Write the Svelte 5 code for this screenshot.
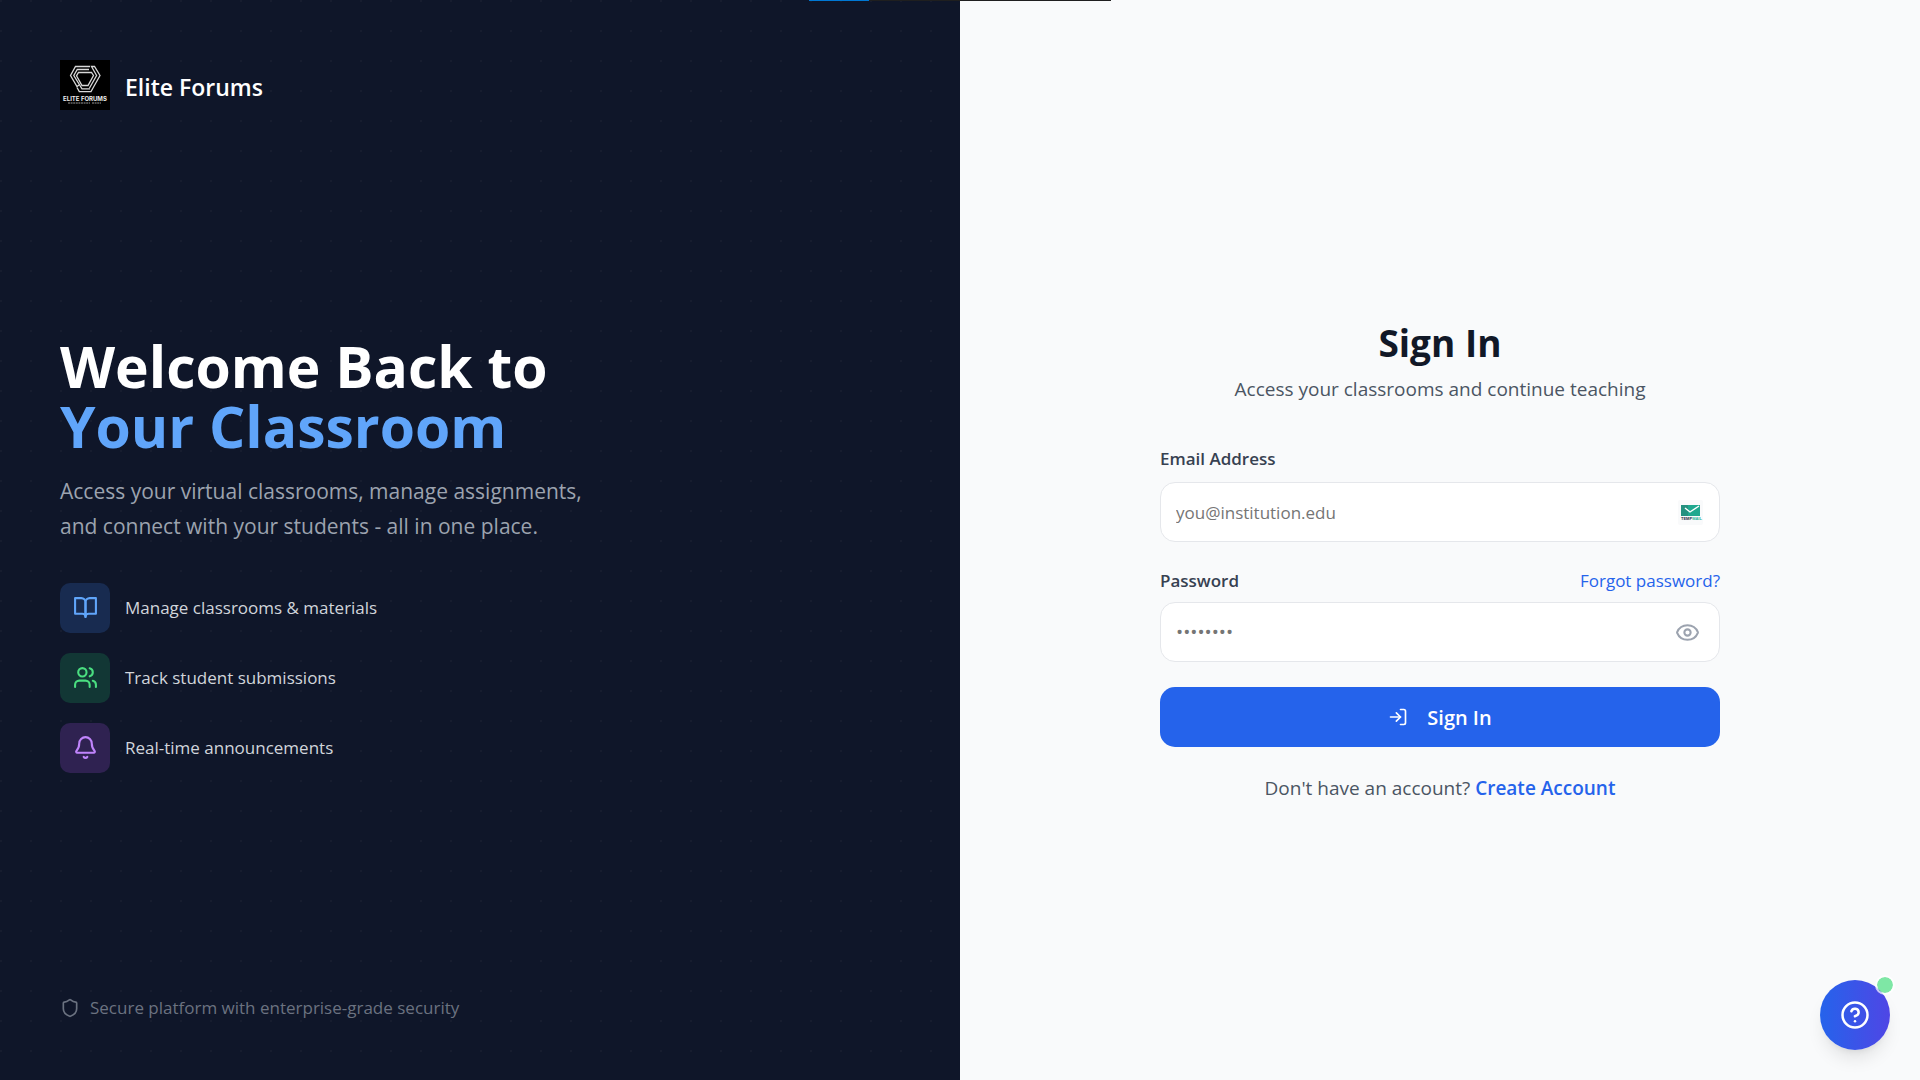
<script>
  let email = $state('');
  let password = $state('');
  let visible = $state(false);

  const features = [
    { tone: 'blue', icon: 'book', label: 'Manage classrooms & materials' },
    { tone: 'green', icon: 'users', label: 'Track student submissions' },
    { tone: 'purple', icon: 'bell', label: 'Real-time announcements' }
  ];

  const paths = {
    book: ['M2 3h6a4 4 0 0 1 4 4v14a3 3 0 0 0-3-3H2z', 'M22 3h-6a4 4 0 0 0-4 4v14a3 3 0 0 1 3-3h7z'],
    users: ['M16 21v-2a4 4 0 0 0-4-4H6a4 4 0 0 0-4 4v2', 'M13 7a4 4 0 1 1-8 0 4 4 0 0 1 8 0', 'M22 21v-2a4 4 0 0 0-3-3.87', 'M16 3.13a4 4 0 0 1 0 7.75'],
    bell: ['M10.27 21a2 2 0 0 0 3.46 0', 'M3.26 15.33A1 1 0 0 0 4 17h16a1 1 0 0 0 .74-1.67C19.41 13.96 18 12.5 18 8A6 6 0 0 0 6 8c0 4.5-1.41 5.96-2.74 7.33'],
    shield: ['M20 13c0 5-3.5 7.5-7.66 8.95a1 1 0 0 1-.67-.01C7.5 20.5 4 18 4 13V6a1 1 0 0 1 1-1c2 0 4.5-1.2 6.24-2.72a1.17 1.17 0 0 1 1.52 0C14.51 3.81 17 5 19 5a1 1 0 0 1 1 1z'],
    eye: ['M2.06 12.35a1 1 0 0 1 0-.7 10.75 10.75 0 0 1 19.88 0 1 1 0 0 1 0 .7 10.75 10.75 0 0 1-19.88 0', 'M15 12a3 3 0 1 1-6 0 3 3 0 0 1 6 0'],
    login: ['M15 3h4a2 2 0 0 1 2 2v14a2 2 0 0 1-2 2h-4', 'M10 17l5-5-5-5', 'M15 12H3'],
    help: ['M22 12a10 10 0 1 1-20 0 10 10 0 0 1 20 0', 'M9.09 9a3 3 0 0 1 5.83 1c0 2-3 3-3 3', 'M12 17h.01']
  };
</script>

{#snippet icon(name)}
  <svg class="icon" viewBox="0 0 24 24" aria-hidden="true">
    {#each paths[name] as d}<path {d} />{/each}
  </svg>
{/snippet}

<div class="page">
  <div class="topbar"></div>

  <section class="brand-panel">
    <header class="brand">
      <svg class="logo" viewBox="0 0 50 50" aria-hidden="true">
        <rect width="50" height="50" fill="#000" />
        <g fill="none" stroke="#d8d8d8" stroke-width="1.3">
          <path d="M30 6.5H15.5L10.5 15.5 17 26.5 19 25" />
          <path d="M29 9.5H17.3L13.8 15.5 22 28.8H30" />
          <path d="M17 27.5 19.3 31.6H31L33 28 40 15.5 34.5 6.5H31.5L36.6 15.5 29.5 28" />
          <path d="M18.5 12.5H31.5L33.5 15.5 28 25.5H22L16.5 15.8Z" />
        </g>
        <text x="25" y="41" text-anchor="middle">ELITE FORUMS</text>
        <path d="M8 43H30M32 43H41" stroke="#999" stroke-width="1" stroke-dasharray="2 .6" />
      </svg>
      <span>Elite Forums</span>
    </header>

    <div class="hero">
      <h1>Welcome Back to<em>Your Classroom</em></h1>
      <p>Access your virtual classrooms, manage assignments,<br />and connect with your students - all in one place.</p>
      <ul>
        {#each features as f}
          <li><span class="tile {f.tone}">{@render icon(f.icon)}</span>{f.label}</li>
        {/each}
      </ul>
    </div>

    <footer>{@render icon('shield')}Secure platform with enterprise-grade security</footer>
  </section>

  <main class="form-panel">
    <div class="card">
      <h2>Sign In</h2>
      <p class="sub">Access your classrooms and continue teaching</p>

      <form onsubmit={(e) => e.preventDefault()}>
        <div class="row"><label for="email">Email Address</label></div>
        <div class="field">
          <input id="email" type="email" placeholder="you@institution.edu" bind:value={email} />
          <svg class="mail" viewBox="0 0 25 25" aria-hidden="true">
            <rect width="25" height="25" rx="2" fill="#f9fafb" />
            <rect x="3" y="5" width="19" height="11" fill="#1fa88f" />
            <path d="M3 5h7v11H3z" fill="#24907f" />
            <path d="M7 8l5 4 9-6" fill="none" stroke="#fff" stroke-width="1.4" />
            <text x="3" y="20">TEMP<tspan fill="#2bb39b">MAIL</tspan></text>
          </svg>
        </div>

        <div class="row second">
          <label for="password">Password</label>
          <a class="forgot" href="#forgot">Forgot password?</a>
        </div>
        <div class="field">
          <input id="password" type={visible ? 'text' : 'password'} placeholder="••••••••" bind:value={password} />
          <button class="eye" type="button" aria-label="Show password" onclick={() => (visible = !visible)}>{@render icon('eye')}</button>
        </div>

        <button class="submit" type="submit">{@render icon('login')}Sign In</button>
      </form>

      <p class="signup">Don't have an account? <a href="#create">Create Account</a></p>
    </div>
  </main>

  <button class="help" type="button" aria-label="Help">{@render icon('help')}<span class="status"></span></button>
</div>

<style>
  :global(body) { margin: 0; }
  .page {
    position: relative;
    display: grid;
    grid-template-columns: 1fr 1fr;
    min-height: 100vh;
    font-family: "Segoe UI", "Open Sans", "Noto Sans", sans-serif;
    font-size: 17px;
    line-height: 25px;
    color: #111827;
    background: #f9fafb;
  }
  .page * { box-sizing: border-box; }
  h1, h2, p, ul { margin: 0; padding: 0; }
  a { color: #2563eb; text-decoration: none; }
  button, input { font: inherit; }
  button { border: 0; padding: 0; cursor: pointer; }
  .icon {
    width: 25px;
    height: 25px;
    flex: none;
    fill: none;
    stroke: currentColor;
    stroke-width: 2;
    stroke-linecap: round;
    stroke-linejoin: round;
  }
  .topbar {
    position: absolute;
    top: 0;
    left: 50%;
    width: 302px;
    height: 1px;
    transform: translateX(-50%);
    background: linear-gradient(90deg, #0078d4 60px, #1f1f1f 60px);
  }

  .brand-panel {
    display: flex;
    flex-direction: column;
    justify-content: space-between;
    padding: 60px;
    color: #fff;
    background: conic-gradient(from 270deg at 2px 2px, #171d2f 90deg, transparent 0) 0 0 / 30px 30px #0f1629;
  }
  .brand {
    display: flex;
    align-items: center;
    gap: 15px;
    height: 50px;
    font-size: 23px;
    line-height: 30px;
    font-weight: 600;
  }
  .brand span { padding-top: 3px; }
  .logo { width: 50px; height: 50px; }
  .logo text { font: bold 6px Inter, sans-serif; fill: #eee; }
  .hero { padding-top: 3px; }
  h1 { font-size: 57px; line-height: 60px; font-weight: 700; }
  h1 em { display: block; font-style: normal; color: #60a5fa; }
  .hero p { margin-top: 18px; font-size: 21px; line-height: 35px; color: #9ca3af; }
  ul { display: grid; gap: 20px; margin-top: 39px; list-style: none; }
  li { display: flex; align-items: center; gap: 15px; color: #d1d5db; }
  .tile { display: grid; place-items: center; width: 50px; height: 50px; border-radius: 10px; }
  .blue { color: #60a5fa; background: #182b50; }
  .green { color: #4ade80; background: #123735; }
  .purple { color: #c084fc; background: #2f2251; }
  footer { display: flex; align-items: center; gap: 10px; color: #6b7280; }
  footer .icon { width: 20px; height: 20px; }

  .form-panel { display: flex; align-items: center; justify-content: center; padding: 43px 40px 0; }
  .card { width: 100%; max-width: 560px; }
  h2 { font-size: 37px; line-height: 45px; font-weight: 700; text-align: center; }
  .sub { margin-top: 9px; font-size: 19px; line-height: 30px; text-align: center; color: #4b5563; }
  form { margin-top: 42px; }
  .row { display: flex; justify-content: space-between; margin-bottom: 11px; }
  .second { margin-top: 26px; margin-bottom: 9px; }
  label { font-weight: 600; color: #374151; }
  .field {
    display: flex;
    align-items: center;
    height: 60px;
    padding: 0 16px 0 15px;
    border: 1px solid #e5e7eb;
    border-radius: 15px;
    background: #fff;
  }
  input { flex: 1; min-width: 0; padding: 0; border: 0; outline: 0; background: none; color: inherit; }
  input::placeholder { color: #757575; opacity: 1; }
  #password { font-size: 19px; }
  .mail { width: 25px; height: 25px; }
  .mail text { font: bold 4px "Liberation Sans", sans-serif; fill: #1f2a44; }
  .eye { display: grid; margin-right: 3px; background: none; color: #9ca3af; }
  .submit {
    display: flex;
    align-items: center;
    justify-content: center;
    gap: 19px;
    width: 100%;
    height: 60px;
    margin-top: 25px;
    border-radius: 15px;
    background: #2563eb;
    color: #fff;
    font-size: 20px;
    font-weight: 600;
  }
  .submit .icon { width: 20px; height: 20px; }
  .signup { margin-top: 26px; font-size: 19px; line-height: 30px; text-align: center; color: #4b5563; }
  .signup a { font-weight: 600; }

  .help {
    position: fixed;
    right: 30px;
    bottom: 30px;
    display: grid;
    place-items: center;
    width: 70px;
    height: 70px;
    border-radius: 50%;
    color: #fff;
    background: linear-gradient(90deg, #2563eb, #4f46e5);
    box-shadow: 0 12px 18px -4px rgb(0 0 0 / 0.1), 0 5px 8px -5px rgb(0 0 0 / 0.1);
  }
  .help .icon { width: 30px; height: 30px; }
  .status {
    position: absolute;
    top: -5px;
    right: -5px;
    width: 20px;
    height: 20px;
    border: 2px solid #fff;
    border-radius: 50%;
    background: #4ade80;
    background-clip: padding-box;
    opacity: 0.7;
  }
</style>
